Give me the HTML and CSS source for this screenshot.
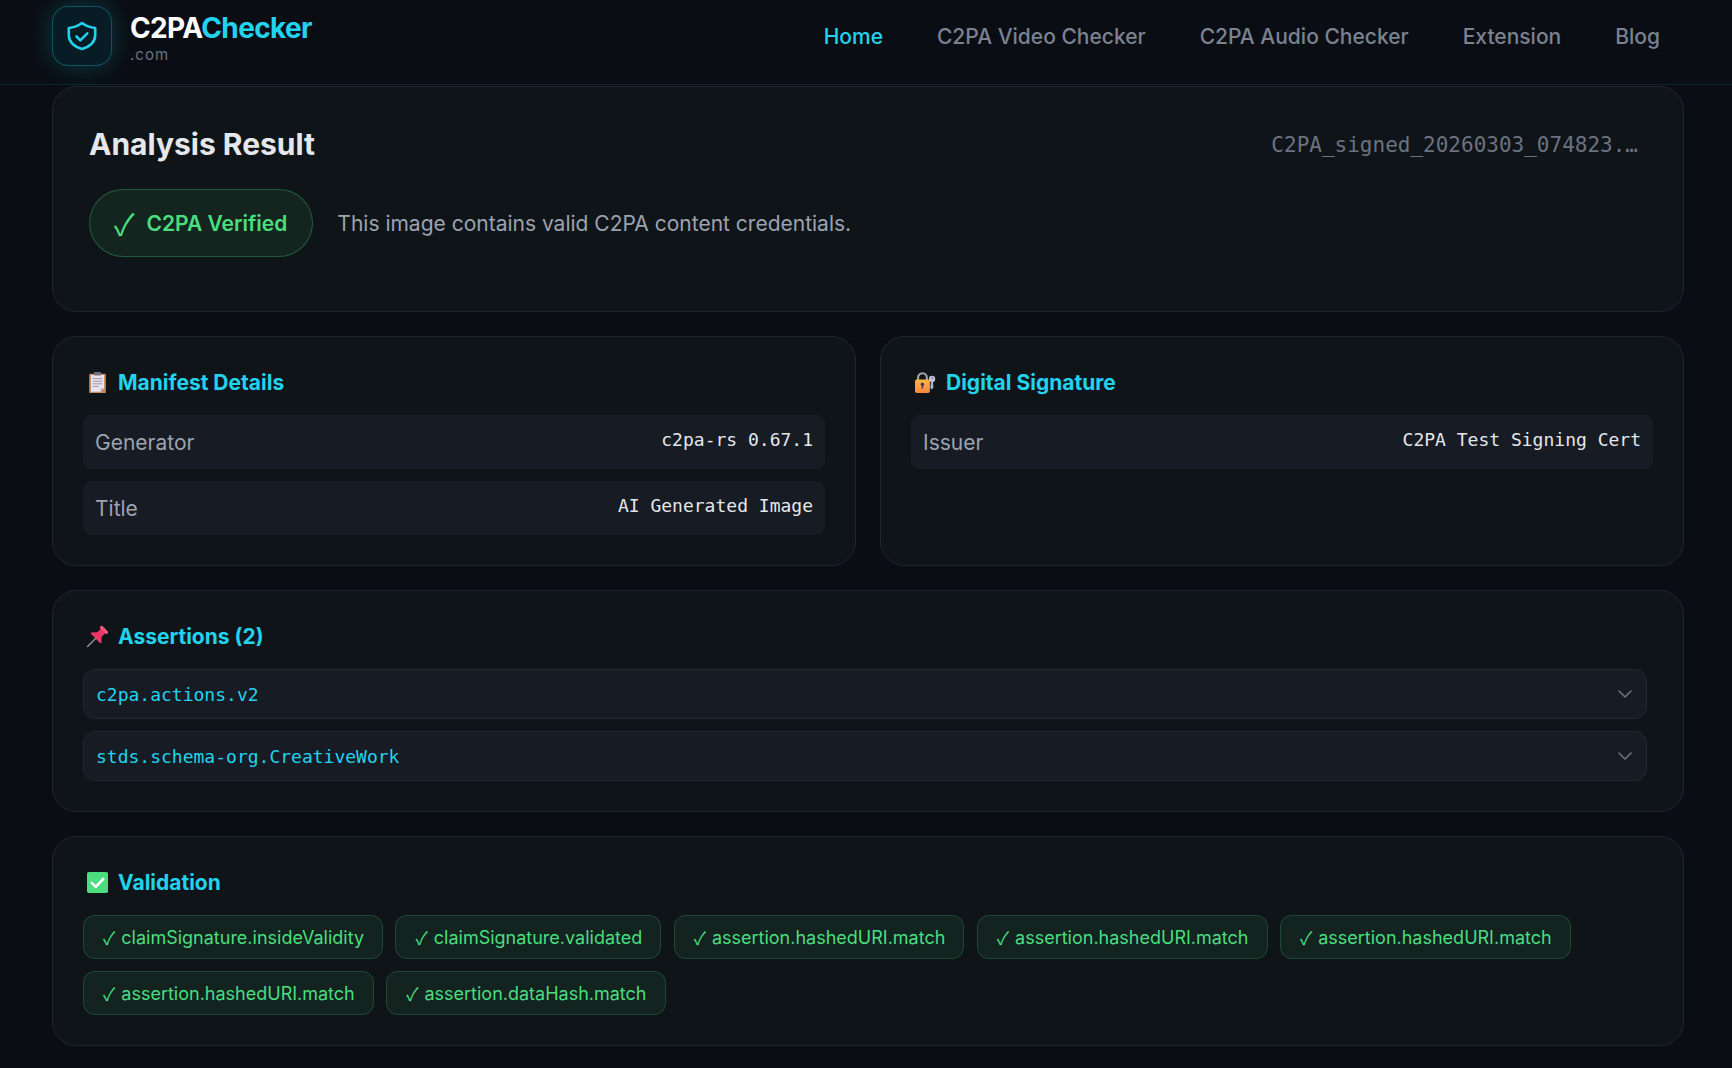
FILE: index.html
```html
<!DOCTYPE html>
<html lang="en">
<head>
  <meta charset="UTF-8" />
  <meta name="viewport" content="width=device-width, initial-scale=1.0" />
  <title>C2PA Checker</title>
  <link rel="stylesheet" href="styles.css">
</head>
<body>
  <header class="site-header">
    <a class="brand" href="#">
      <span class="brand-icon">
        <svg width="30" height="30" viewBox="0 0 30 30" fill="none" stroke="#22d3ee" stroke-width="2.6" stroke-linecap="round" stroke-linejoin="round">
          <path d="M15 2C11 5 6.500 6.500 1.800 7V14C1.800 21 7 25.500 15 28C23 25.500 28.200 21 28.200 14V7C23.500 6.500 19 5 15 2Z"/>
          <path d="M9.500 15.500l3.800 3.800 7-7"/>
        </svg>
      </span>
      <span class="brand-text">
        <span class="brand-name">C2PA<span class="accent">Checker</span></span>
        <span class="brand-domain">.com</span>
      </span>
    </a>
    <nav class="nav">
      <a class="nav-link active" href="#">Home</a>
      <a class="nav-link" href="#">C2PA Video Checker</a>
      <a class="nav-link" href="#">C2PA Audio Checker</a>
      <a class="nav-link" href="#">Extension</a>
      <a class="nav-link" href="#">Blog</a>
    </nav>
  </header>

  <main class="content">
    <section class="card result-card">
      <div class="result-top">
        <h2 class="result-title">Analysis Result</h2>
        <span class="file-name">C2PA_signed_20260303_074823.…</span>
      </div>
      <div class="status">
        <span class="status-pill"><span class="status-check">✓</span>C2PA Verified</span>
        <span class="status-text">This image contains valid C2PA content credentials.</span>
      </div>
    </section>

    <div class="two-col">
      <section class="card">
        <h3 class="card-title">
          <svg class="emoji" viewBox="0 0 24 24">
            <rect x="2.500" y="2" width="19" height="22" rx="1" fill="#c98a5a"/>
            <path d="M4.500 3.500h15v15l-4 4h-11z" fill="#e8e4ee"/>
            <path d="M19.500 18.500l-4 4v-4z" fill="#b9b2c4"/>
            <rect x="8" y="0" width="8" height="4" rx="1" fill="#75707f"/>
            <path d="M6.500 7.500h11M6.500 10.500h11M6.500 13.500h11M6.500 16.500h7" stroke="#8f88a0" stroke-width="1"/>
          </svg>
          Manifest Details
        </h3>
        <div class="row"><span class="row-label">Generator</span><span class="row-value">c2pa-rs 0.67.1</span></div>
        <div class="row"><span class="row-label">Title</span><span class="row-value">AI Generated Image</span></div>
      </section>
      <section class="card">
        <h3 class="card-title">
          <svg class="emoji" viewBox="0 0 24 24">
            <defs>
              <linearGradient id="lock-body" x1="0" y1="0" x2="0" y2="1">
                <stop offset="0" stop-color="#fbb83f"/>
                <stop offset="1" stop-color="#fb8543"/>
              </linearGradient>
            </defs>
            <path d="M3.500 10V6.500a5 5 0 0 1 10 0V10" fill="none" stroke="#a7a2b3" stroke-width="2.400"/>
            <circle cx="19.500" cy="8" r="3.600" fill="#c9c2d8"/>
            <path d="M18.500 10l-1 8 1.500 2 2-2-.5-8z" fill="#b9b2cc"/>
            <circle cx="19.800" cy="6.800" r="1" fill="#6f6880"/>
            <rect x="0" y="8.500" width="17" height="15.500" rx="2" fill="url(#lock-body)"/>
            <circle cx="8.500" cy="14" r="2" fill="#4a3b52"/>
            <rect x="7.600" y="14" width="1.800" height="5" fill="#4a3b52"/>
          </svg>
          Digital Signature
        </h3>
        <div class="row"><span class="row-label">Issuer</span><span class="row-value">C2PA Test Signing Cert</span></div>
      </section>
    </div>

    <section class="card">
      <h3 class="card-title">
        <svg class="emoji" viewBox="0 0 24 24">
          <g transform="rotate(45 12 12) translate(12 12) scale(.8) translate(-12 -12)">
            <path d="M12 15v17" stroke="#9a96a0" stroke-width="2" stroke-linecap="round"/>
            <path d="M7.500 0h9v8l4.500 5h1v3H2v-3h1l4.500-5z" fill="#ee3568"/>
            <rect x="5" y="-3.500" width="14" height="4.500" rx="1.500" fill="#f6557f"/>
          </g>
        </svg>
        Assertions (2)
      </h3>
      <div class="assertions">
        <div class="assertion">
          <span class="assertion-name">c2pa.actions.v2</span>
          <svg class="chevron" width="24" height="24" viewBox="0 0 24 24" fill="none" stroke="#6b7280" stroke-width="1.600" stroke-linecap="round" stroke-linejoin="round"><path d="m6 9 6 6 6-6"/></svg>
        </div>
        <div class="assertion">
          <span class="assertion-name">stds.schema-org.CreativeWork</span>
          <svg class="chevron" width="24" height="24" viewBox="0 0 24 24" fill="none" stroke="#6b7280" stroke-width="1.600" stroke-linecap="round" stroke-linejoin="round"><path d="m6 9 6 6 6-6"/></svg>
        </div>
      </div>
    </section>

    <section class="card">
      <h3 class="card-title">
        <svg class="emoji" viewBox="0 0 24 24">
          <rect x="0" y="0" width="24" height="24" rx="2" fill="#4ade80"/>
          <path d="M5.500 12.500l4.500 4.500 8.500-9" fill="none" stroke="#fff" stroke-width="3" stroke-linecap="round" stroke-linejoin="round"/>
        </svg>
        Validation
      </h3>
      <div class="badges">
        <span class="badge"><span class="tick">✓</span>claimSignature.insideValidity</span>
        <span class="badge"><span class="tick">✓</span>claimSignature.validated</span>
        <span class="badge"><span class="tick">✓</span>assertion.hashedURI.match</span>
        <span class="badge"><span class="tick">✓</span>assertion.hashedURI.match</span>
        <span class="badge"><span class="tick">✓</span>assertion.hashedURI.match</span>
        <span class="badge"><span class="tick">✓</span>assertion.hashedURI.match</span>
        <span class="badge"><span class="tick">✓</span>assertion.dataHash.match</span>
      </div>
    </section>
  </main>
</body>
</html>
```

FILE: styles.css
```css
* {
  box-sizing: border-box;
}
body {
  margin: 0;
  background: #0a0d14;
  color: #e5e7eb;
  font-family: Inter, 'Noto Sans', sans-serif;
  overflow: hidden;
  height: 100vh;
}
a {
  text-decoration: none;
}
.site-header {
  display: flex;
  align-items: center;
  justify-content: space-between;
  height: 85px;
  padding: 0 52px;
  background: #0a0e14;
  border-bottom: 1px solid rgba(34, 211, 238, 0.12);
}
.brand {
  display: flex;
  align-items: center;
  gap: 18px;
  margin-top: -13px;
}
.brand-icon {
  display: flex;
  align-items: center;
  justify-content: center;
  width: 60px;
  height: 60px;
  border-radius: 16px;
  background: #071c25;
  border: 1px solid rgba(34, 211, 238, 0.3);
  box-shadow: 0 0 24px rgba(34, 211, 238, 0.22);
}
.brand-text {
  display: flex;
  flex-direction: column;
  padding-top: 5px;
}
.brand-name {
  font-size: 28px;
  font-weight: 700;
  line-height: 34px;
  letter-spacing: -0.65px;
  color: #fff;
}
.accent {
  color: #22d3ee;
}
.brand-domain {
  font-size: 15px;
  line-height: 20px;
  letter-spacing: 1px;
  color: #6b7280;
}
.nav {
  display: flex;
  gap: 54px;
  margin-top: -12px;
  padding-right: 20px;
}
.nav-link {
  font-size: 21px;
  font-weight: 500;
  color: #7b8290;
}
.nav-link.active {
  color: #22d3ee;
}
.content {
  display: flex;
  flex-direction: column;
  gap: 24px;
  padding: 1px 48px 0 52px;
}
.card {
  background: #0f1419;
  border: 1px solid #1f2530;
  border-radius: 24px;
  padding: 30px;
}
.result-card {
  padding: 38px 45px 54px 36px;
}
.result-top {
  display: flex;
  align-items: center;
  justify-content: space-between;
  margin-bottom: 24px;
}
.result-title {
  margin: 0;
  font-size: 30px;
  line-height: 38px;
  margin-bottom: 2px;
  font-weight: 700;
  color: #e5e7eb;
}
.file-name {
  font-family: 'DejaVu Sans Mono', monospace;
  font-size: 21px;
  color: #6b7280;
}
.status {
  display: flex;
  align-items: center;
  gap: 24px;
}
.status-pill {
  display: flex;
  align-items: center;
  gap: 12px;
  height: 68px;
  padding: 0 25px 0 24px;
  border-radius: 34px;
  font-size: 21px;
  font-weight: 600;
  color: #4ade80;
  background: #14251f;
  border: 1px solid rgba(74, 222, 128, 0.3);
}
.status-check {
  font-family: 'Noto Sans CJK SC', 'DejaVu Sans', sans-serif;
  font-size: 30px;
  font-weight: 400;
}
.status-text {
  font-size: 21px;
  color: #9ca3af;
}
.two-col {
  display: grid;
  grid-template-columns: 1fr 1fr;
  gap: 24px;
}
.card-title {
  display: flex;
  align-items: center;
  gap: 10px;
  margin: 0 0 18px;
  height: 30px;
  font-size: 21px;
  font-weight: 700;
  color: #22d3ee;
}
.emoji {
  width: 21px;
  height: 21px;
  margin-left: 4px;
  flex: none;
  overflow: visible;
}
.row {
  display: flex;
  align-items: center;
  justify-content: space-between;
  height: 54px;
  padding: 0 12px;
  margin-bottom: 12px;
  background: #161b24;
  border-radius: 8px;
}
.row:last-child {
  margin-bottom: 0;
}
.row-label {
  font-size: 21px;
  color: #9ca3af;
}
.row-value {
  font-family: 'DejaVu Sans Mono', monospace;
  font-size: 18px;
  color: #e5e7eb;
  margin-top: -5px;
}
.assertions {
  display: flex;
  flex-direction: column;
  gap: 12px;
  padding-right: 6px;
}
.assertion {
  display: flex;
  align-items: center;
  justify-content: space-between;
  height: 50px;
  padding: 0 9px 0 12px;
  background: #161b24;
  border: 1px solid #222833;
  border-radius: 12px;
}
.assertion-name {
  font-family: 'DejaVu Sans Mono', monospace;
  font-size: 18px;
  color: #22d3ee;
}
.badges {
  display: flex;
  flex-wrap: wrap;
  gap: 12px 12.4px;
}
.badge {
  display: flex;
  align-items: center;
  gap: 6px;
  height: 44px;
  padding: 0 18px 0 19px;
  font-size: 18px;
  color: #4ade80;
  background: #13231f;
  border: 1px solid rgba(74, 222, 128, 0.2);
  border-radius: 12px;
}
.tick {
  font-family: 'Noto Sans CJK SC', 'DejaVu Sans', sans-serif;
}
```
